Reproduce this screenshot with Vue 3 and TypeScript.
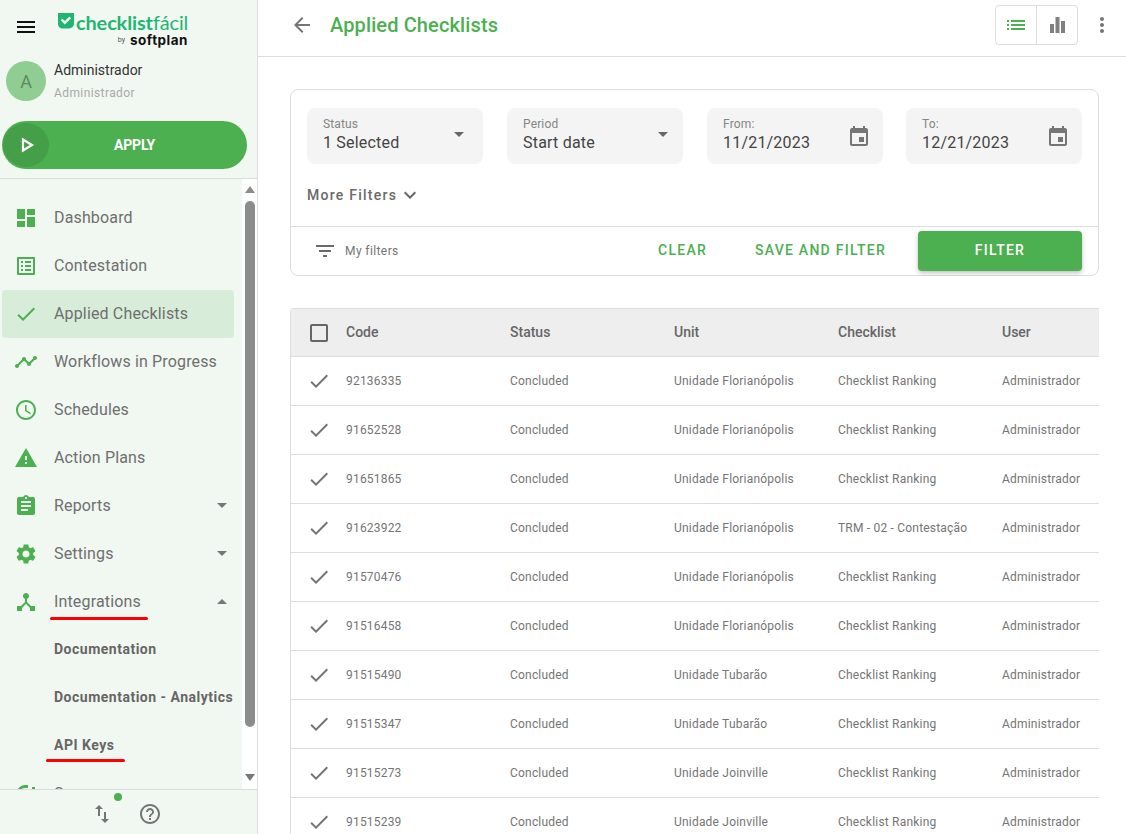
<script setup lang="ts">
interface NavItem { label: string; icon: string; active?: boolean; caret?: 'up' | 'down'; sub?: boolean; mark?: number }
const nav: NavItem[] = [
  { label: 'Dashboard', icon: 'M3 13h8V3H3v10zm0 8h8v-6H3v6zm10 0h8V11h-8v10zm0-18v6h8V3h-8z' },
  { label: 'Contestation', icon: 'M19 5v14H5V5h14m1.1-2H3.9c-.5 0-.9.4-.9.9v16.2c0 .4.4.9.9.9h16.2c.4 0 .9-.5.9-.9V3.9c0-.5-.5-.9-.9-.9zM11 7h6v2h-6V7zm0 4h6v2h-6v-2zm0 4h6v2h-6v-2zM7 7h2v2H7V7zm0 4h2v2H7v-2zm0 4h2v2H7v-2z' },
  { label: 'Applied Checklists', icon: 'M9 16.17 4.83 12l-1.42 1.41L9 19 21 7l-1.41-1.41z', active: true },
  { label: 'Workflows in Progress', icon: 'M23 8c0 1.1-.9 2-2 2-.18 0-.35-.02-.51-.07l-3.56 3.55c.05.16.07.34.07.52 0 1.1-.9 2-2 2s-2-.9-2-2c0-.18.02-.36.07-.52l-2.55-2.55c-.16.05-.34.07-.52.07s-.36-.02-.52-.07l-4.55 4.56c.05.16.07.33.07.51 0 1.1-.9 2-2 2s-2-.9-2-2 .9-2 2-2c.18 0 .35.02.51.07l4.56-4.55C8.02 9.36 8 9.18 8 9c0-1.1.9-2 2-2s2 .9 2 2c0 .18-.02.36-.07.52l2.55 2.55c.16-.05.34-.07.52-.07s.36.02.52.07l3.55-3.56C19.02 8.35 19 8.18 19 8c0-1.1.9-2 2-2s2 .9 2 2z' },
  { label: 'Schedules', icon: 'M11.99 2C6.47 2 2 6.48 2 12s4.47 10 9.99 10C17.52 22 22 17.52 22 12S17.52 2 11.99 2zM12 20c-4.42 0-8-3.58-8-8s3.58-8 8-8 8 3.58 8 8-3.58 8-8 8zm.5-13H11v6l5.25 3.15.75-1.23-4.5-2.67z' },
  { label: 'Action Plans', icon: 'M1 21h22L12 2 1 21zm12-3h-2v-2h2v2zm0-4h-2v-4h2v4z' },
  { label: 'Reports', icon: 'M19 3h-4.18C14.4 1.84 13.3 1 12 1s-2.4.84-2.82 2H5c-1.1 0-2 .9-2 2v14c0 1.1.9 2 2 2h14c1.1 0 2-.9 2-2V5c0-1.1-.9-2-2-2zm-7 0c.55 0 1 .45 1 1s-.45 1-1 1-1-.45-1-1 .45-1 1-1zm2 14H7v-2h7v2zm3-4H7v-2h10v2zm0-4H7V7h10v2z', caret: 'down' },
  { label: 'Settings', icon: 'M19.14 12.94c.04-.3.06-.61.06-.94 0-.32-.02-.64-.07-.94l2.03-1.58c.18-.14.23-.41.12-.61l-1.92-3.32c-.12-.22-.37-.29-.59-.22l-2.39.96c-.5-.38-1.03-.7-1.62-.94l-.36-2.54c-.04-.24-.24-.41-.48-.41h-3.84c-.24 0-.43.17-.47.41l-.36 2.54c-.59.24-1.13.57-1.62.94l-2.39-.96c-.22-.08-.47 0-.59.22L2.74 8.87c-.12.21-.08.47.12.61l2.03 1.58c-.05.3-.09.63-.09.94s.02.64.07.94l-2.03 1.58c-.18.14-.23.41-.12.61l1.92 3.32c.12.22.37.29.59.22l2.39-.96c.5.38 1.03.7 1.62.94l.36 2.54c.05.24.24.41.48.41h3.84c.24 0 .44-.17.47-.41l.36-2.54c.59-.24 1.13-.56 1.62-.94l2.39.96c.22.08.47 0 .59-.22l1.92-3.32c.12-.22.07-.47-.12-.61l-2.01-1.58zM12 15.6c-1.98 0-3.6-1.62-3.6-3.6s1.62-3.6 3.6-3.6 3.6 1.62 3.6 3.6-1.62 3.6-3.6 3.6z', caret: 'down' },
  { label: 'Integrations', icon: 'M17 16l-4-4V8.82C14.16 8.4 15 7.3 15 6c0-1.66-1.34-3-3-3S9 4.34 9 6c0 1.3.84 2.4 2 2.82V12l-4 4H3v5h5v-3.05l4-4.2 4 4.2V21h5v-5h-4z', caret: 'up', mark: 98 },
  { label: 'Documentation', icon: '', sub: true },
  { label: 'Documentation - Analytics', icon: '', sub: true },
  { label: 'API Keys', icon: '', sub: true, mark: 79 },
  { label: 'Surveys', icon: 'M3 15a9 9 0 0 1 9-12h2v3h-2a6 6 0 0 0-6 9zM18 5h3v3h-3z' },
]
const rows = [
  ['92136335', 'Unidade Florianópolis', 'Checklist Ranking'],
  ['91652528', 'Unidade Florianópolis', 'Checklist Ranking'],
  ['91651865', 'Unidade Florianópolis', 'Checklist Ranking'],
  ['91623922', 'Unidade Florianópolis', 'TRM - 02 - Contestação'],
  ['91570476', 'Unidade Florianópolis', 'Checklist Ranking'],
  ['91516458', 'Unidade Florianópolis', 'Checklist Ranking'],
  ['91515490', 'Unidade Tubarão', 'Checklist Ranking'],
  ['91515347', 'Unidade Tubarão', 'Checklist Ranking'],
  ['91515273', 'Unidade Joinville', 'Checklist Ranking'],
  ['91515239', 'Unidade Joinville', 'Checklist Ranking'],
]
const fields = [
  { label: 'Status', value: '1 Selected', kind: 'caret' },
  { label: 'Period', value: 'Start date', kind: 'caret period' },
  { label: 'From:', value: '11/21/2023', kind: 'date' },
  { label: 'To:', value: '12/21/2023', kind: 'date' },
]
</script>

<template>
  <div class="app">
    <aside class="side">
      <div class="brand">
        <svg class="burger" viewBox="0 0 24 24"><path d="M3 18h18v-2H3v2zm0-5h18v-2H3v2zm0-7v2h18V6H3z" /></svg>
        <div class="logo">
          <div class="logo-top">
            <svg class="logo-check" viewBox="0 0 16 16"><path fill="#1fb573" d="M0 0h16v10.500a5 5 0 0 1-5 5H4.500A4.500 4.500 0 0 1 0 11z" /><path fill="none" stroke="#f1f8f1" stroke-width="2.400" d="m3.500 6.500 3.300 3.200 5.500-5.400" /></svg>
            <span class="logo-a">checklist</span><span class="logo-b">fácil</span>
          </div>
          <div class="logo-bottom"><span class="by">by</span><span class="soft">softplan</span></div>
        </div>
      </div>
      <div class="user">
        <div class="avatar">A</div>
        <div class="who">
          <div class="who-a">Administrador</div>
          <div class="who-b">Administrador</div>
        </div>
      </div>
      <button class="apply">
        <span class="apply-ic"><svg viewBox="0 0 14 16"><path d="M2 2.500v11l9-5.500z" fill="none" stroke="#fff" stroke-width="2.200" /></svg></span>
        <span class="apply-t">APPLY</span>
      </button>
      <div class="nav-wrap">
        <nav class="nav">
          <div v-for="n in nav" :key="n.label" class="item" :class="{ active: n.active, sub: n.sub }">
            <svg v-if="n.icon" class="nic" viewBox="0 0 24 24"><path :d="n.icon" /></svg>
            <span class="lbl">{{ n.label }}</span>
            <span v-if="n.caret" class="caret" :class="n.caret"></span>
            <span v-if="n.mark" class="mark" :style="{ width: n.mark + 'px' }"></span>
          </div>
        </nav>
        <div class="bar">
          <span class="arrow up"></span>
          <span class="thumb"></span>
          <span class="arrow dn"></span>
        </div>
      </div>
      <div class="foot">
        <span class="sync">
          <svg viewBox="0 0 24 24"><path d="M16 17.010V10h-2v7.010h-3L15 21l4-3.990h-3zM9 3 5 6.990h3V14h2V6.990h3L9 3z" /></svg>
          <i class="dot"></i>
        </span>
        <svg class="help" viewBox="0 0 24 24"><path d="M11 18h2v-2h-2v2zm1-16C6.480 2 2 6.480 2 12s4.480 10 10 10 10-4.480 10-10S17.520 2 12 2zm0 18c-4.410 0-8-3.590-8-8s3.590-8 8-8 8 3.590 8 8-3.590 8-8 8zm0-14c-2.210 0-4 1.790-4 4h2c0-1.100.9-2 2-2s2 .9 2 2c0 2-3 1.750-3 5h2c0-2.250 3-2.500 3-5 0-2.210-1.790-4-4-4z" /></svg>
      </div>
    </aside>

    <main class="main">
      <header class="top">
        <svg class="back" viewBox="0 0 24 24"><path d="M20 11H7.830l5.590-5.590L12 4l-8 8 8 8 1.410-1.410L7.830 13H20v-2z" /></svg>
        <h1 class="title">Applied Checklists</h1>
        <div class="toggle">
          <span class="tg"><svg class="green" viewBox="0 0 24 24"><path d="M4 14h2v-2H4v2zm0 4h2v-2H4v2zM4 10h2V8H4v2zm4 4h14v-2H8v2zm0 4h14v-2H8v2zM8 8v2h14V8H8z" transform="translate(-1 -1)" /></svg></span>
          <span class="tg"><svg viewBox="0 0 24 24"><path d="M5 11h4v9H5zm5.500-7h4v16h-4zM16 8h4v12h-4z" /></svg></span>
        </div>
        <svg class="kebab" viewBox="0 0 24 24"><path d="M12 8c1.100 0 2-.9 2-2s-.9-2-2-2-2 .9-2 2 .9 2 2 2zm0 2c-1.100 0-2 .9-2 2s.9 2 2 2 2-.9 2-2-.9-2-2-2zm0 6c-1.100 0-2 .9-2 2s.9 2 2 2 2-.9 2-2-.9-2-2-2z" /></svg>
      </header>

      <div class="content">
        <section class="card">
          <div class="fields">
            <div v-for="f in fields" :key="f.label" class="field">
              <div class="f-text">
                <div class="f-l">{{ f.label }}</div>
                <div class="f-v">{{ f.value }}</div>
              </div>
              <span v-if="f.kind !== 'date'" class="f-caret" :class="{ period: f.kind === 'caret period' }"></span>
              <svg v-else class="f-cal" viewBox="0 0 24 24"><path d="M17 12h-5v5h5v-5zM16 1v2H8V1H6v2H5c-1.110 0-1.990.9-1.990 2L3 19c0 1.100.89 2 2 2h14c1.100 0 2-.9 2-2V5c0-1.100-.9-2-2-2h-1V1h-2zm3 18H5V8h14v11z" /></svg>
            </div>
          </div>
          <div class="more">
            <span>More Filters</span>
            <svg viewBox="0 0 24 24"><path d="M7.410 8.590 12 13.170l4.590-4.580L18 10l-6 6-6-6z" /></svg>
          </div>
          <div class="actions">
            <svg class="fl-ic" viewBox="0 0 24 24"><path d="M10 18h4v-2h-4v2zM3 6v2h18V6H3zm3 7h12v-2H6v2z" /></svg>
            <span class="myf">My filters</span>
            <span class="link clear">CLEAR</span>
            <span class="link save">SAVE AND FILTER</span>
            <button class="filter">FILTER</button>
          </div>
        </section>

        <section class="table">
          <div class="tr th">
            <span class="c0"><i class="box"></i></span>
            <span>Code</span><span>Status</span><span>Unit</span><span>Checklist</span><span>User</span>
          </div>
          <div v-for="r in rows" :key="r[0]" class="tr td">
            <span class="c0"><svg viewBox="0 0 24 24"><path d="M9 16.170 4.830 12l-1.420 1.410L9 19 21 7l-1.410-1.410z" /></svg></span>
            <span>{{ r[0] }}</span><span>Concluded</span><span>{{ r[1] }}</span><span>{{ r[2] }}</span><span>Administrador</span>
          </div>
        </section>
      </div>
    </main>
  </div>
</template>

<style>
html, body { margin: 0; overflow: hidden; background: #fff; }
</style>

<style scoped>
* { box-sizing: border-box; }
.app { display: flex; width: 1126px; height: 834px; overflow: hidden; font-family: Roboto, "Liberation Sans", sans-serif; color: #666; background: #fff; }
.side { width: 258px; flex: none; height: 834px; display: flex; flex-direction: column; background: #f1f8f1; border-right: 1px solid #ddd; }
.brand { height: 56px; flex: none; display: flex; padding: 12px 0 0 14px; }
.burger { width: 24px; height: 24px; margin-top: 3px; fill: #111; flex: none; }
.logo { margin-left: 20px; width: 130px; }
.logo-top { display: flex; align-items: center; height: 20px; color: #1fb573; font: 700 19.900px/20px Lato, sans-serif; letter-spacing: -.1px; white-space: nowrap; }
.logo-check { width: 16px; height: 16px; flex: none; margin-right: 2px; margin-top: -2px; }
.logo-b { font-weight: 400; }
.logo-bottom { display: flex; justify-content: flex-end; align-items: center; margin: 1px 0 0 0; color: #111; }
.by { font: 400 7px/10px Roboto, sans-serif; margin-right: 5px; color: #555; }
.soft { font: 700 13.500px/14px Inter, sans-serif; letter-spacing: .5px; }
.user { height: 65px; flex: none; display: flex; padding: 5px 0 0 6px; }
.avatar { width: 40px; height: 40px; border-radius: 50%; background: #90cd92; color: #5f8a62; font-size: 18px; display: flex; align-items: center; justify-content: center; }
.who { margin-left: 8px; }
.who-a { font-size: 14px; line-height: 18px; color: #333; margin-top: 0; }
.who-b { font-size: 12px; line-height: 16px; color: #a9a9a9; margin-top: 6px; letter-spacing: .4px; }
.apply { position: relative; flex: none; width: 245px; height: 48px; margin-left: 2px; padding: 0; border: 0; border-radius: 24px; background: #4caf50; color: #fff; font: 700 14px/48px Roboto, sans-serif; letter-spacing: -.2px; display: flex; }
.apply-ic { width: 46px; height: 44px; margin: 2px 0 0 1px; border-radius: 50%; background: #449f48; display: flex; align-items: center; justify-content: center; }
.apply-ic svg { width: 14px; height: 16px; margin-left: 3px; }
.apply-t { position: absolute; left: 0; width: 265px; text-align: center; }
.nav-wrap { margin-top: 9px; flex: 1; min-height: 0; display: flex; border-top: 1px solid #ddd; overflow: hidden; }
.nav { flex: 1; min-width: 0; padding: 15px 0 0 2px; }
.item { position: relative; height: 48px; width: 232px; display: flex; align-items: center; border-radius: 4px; font-size: 16px; color: #6f6f6f; letter-spacing: .15px; }
.lbl { margin-top: -2px; }
.item.active { background: #d8edd9; }
.item.sub { font-size: 14px; font-weight: 700; color: #666; letter-spacing: .5px; padding-left: 52px; white-space: nowrap; }
.nic { width: 24px; height: 24px; margin-left: 12px; margin-right: 16px; fill: #4caf50; flex: none; }
.caret { position: absolute; left: 215px; top: 21px; border-left: 5px solid transparent; border-right: 5px solid transparent; }
.caret.down { border-top: 5px solid #777; }
.caret.up { border-bottom: 5px solid #777; }
.mark { position: absolute; left: 48px; top: 39px; height: 3px; background: #f00; border-radius: 2px; }
.item.sub .mark { left: 44px; top: 37px; }
.bar { width: 15px; flex: none; background: #fff; position: relative; }
.thumb { position: absolute; left: 3px; top: 22px; width: 10px; height: 526px; border-radius: 5px; background: #8c8c8c; }
.arrow { position: absolute; left: 3px; border-left: 5px solid transparent; border-right: 5px solid transparent; }
.arrow.up { top: 7px; border-bottom: 7px solid #8c8c8c; }
.arrow.dn { top: 595px; border-top: 7px solid #777; }
.foot { flex: none; height: 45px; border-top: 1px solid #ddd; display: flex; align-items: center; justify-content: center; gap: 24px; padding: 4px 6px 0 0; background: #f1f8f1; position: relative; z-index: 1; }
.sync { position: relative; width: 24px; height: 24px; }
.sync svg { width: 24px; height: 24px; fill: #757575; }
.dot { position: absolute; left: 24px; top: -9px; width: 8px; height: 8px; border-radius: 50%; background: #4caf50; }
.help { width: 24px; height: 24px; fill: #757575; }
.main { flex: 1; min-width: 0; display: flex; flex-direction: column; }
.top { height: 57px; flex: none; border-bottom: 1px solid #ddd; display: flex; align-items: center; padding: 0 12px 6px 32px; }
.back { width: 24px; height: 24px; fill: #757575; flex: none; }
.title { margin: 0 0 0 16px; font-size: 20px; font-weight: 500; color: #4caf50; flex: 1; letter-spacing: .12px; }
.toggle { display: flex; width: 83px; height: 40px; border: 1px solid #ddd; border-radius: 4px; margin-right: 12px; }
.tg { flex: 1; display: flex; align-items: center; justify-content: center; }
.tg + .tg { border-left: 1px solid #ddd; }
.tg svg { width: 24px; height: 24px; fill: #808080; }
.tg svg.green { fill: #4caf50; }
.kebab { width: 24px; height: 24px; fill: #757575; }
.content { padding: 32px 27px 0 32px; }
.card { height: 187px; border: 1px solid #ddd; border-radius: 8px; display: flex; flex-direction: column; }
.fields { display: grid; grid-template-columns: 200px 200px 199px 176px; padding: 18px 16px 0; }
.field { width: 176px; height: 56px; background: #f4f4f4; border-radius: 8px; display: flex; align-items: center; padding: 0 12px 0 16px; }
.f-text { flex: 1; margin-top: -3px; }
.f-l { font-size: 12px; line-height: 15px; color: #858585; letter-spacing: .15px; }
.f-v { font-size: 16px; line-height: 20px; color: #444; letter-spacing: .2px; margin-top: 1px; }
.f-caret { border-left: 5px solid transparent; border-right: 5px solid transparent; border-top: 5px solid #666; margin: 0 7px 4px 0; }
.f-caret.period { margin-right: 3px; }
.f-cal { width: 24px; height: 24px; fill: #757575; margin-top: 1px; }
.more { height: 63px; padding: 0 0 0 16px; margin-top: 0; display: flex; align-items: center; font-size: 14px; font-weight: 500; color: #6a6a6a; letter-spacing: 1.250px; border-bottom: 1px solid #ddd; }
.more svg { width: 24px; height: 24px; fill: #666; margin-left: 1px; }
.actions { flex: 1; display: flex; align-items: center; padding: 0 16px 0 22px; }
.fl-ic { width: 24px; height: 24px; fill: #6a6a6a; flex: none; }
.myf { font-size: 12px; color: #757575; margin-left: 8px; letter-spacing: .4px; flex: 1; }
.link { font-size: 14px; font-weight: 500; letter-spacing: 1.250px; color: #4caf50; margin-bottom: 2px; }
.save { margin-left: 48px; }
.filter { width: 164px; height: 40px; margin-left: 32px; padding: 0 0 2px; border: 0; border-radius: 4px; background: #4caf50; color: #fff; font: 500 14px Roboto, sans-serif; letter-spacing: 1.250px; box-shadow: 0 2px 4px rgba(0,0,0,.25); }
.table { margin-top: 32px; border-top: 1px solid #ddd; border-left: 1px solid #ddd; border-top-left-radius: 4px; overflow: hidden; }
.tr { display: grid; grid-template-columns: 55px 164px 164px 164px 164px 97px; align-items: center; white-space: nowrap; border-bottom: 1px solid #ddd; }
.th { height: 48px; background: #eee; font-size: 14px; font-weight: 500; color: #666; }
.th span:not(.c0) { margin-top: -2px; }
.td { height: 49px; font-size: 12px; color: #757575; letter-spacing: .2px; }
.c0 { display: flex; padding-left: 18px; }
.box { width: 18px; height: 18px; border: 2px solid #666; border-radius: 2px; margin-left: 1px; }
.td .c0 svg { width: 24px; height: 24px; fill: #757575; margin-left: -2px; margin-top: 0; }
</style>
